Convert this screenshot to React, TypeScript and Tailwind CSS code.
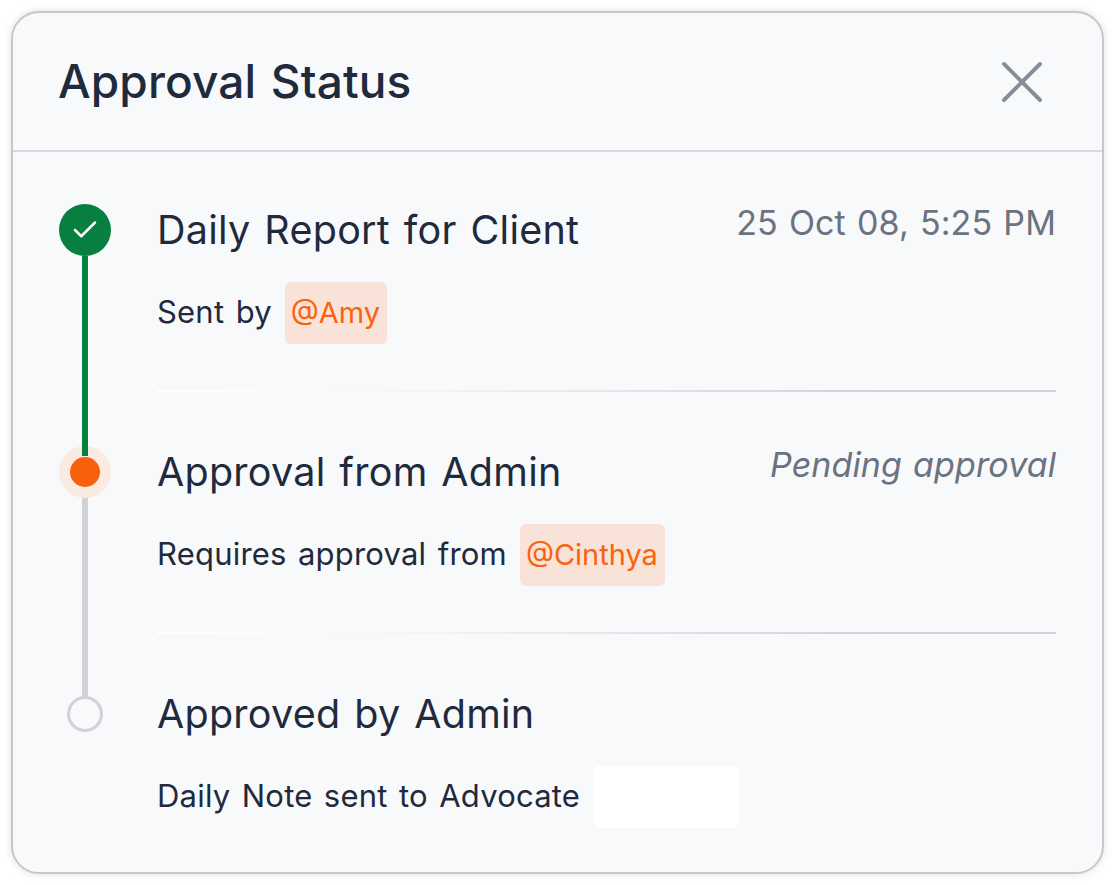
import { Check, X } from 'lucide-react';

type Step = {
  title: string;
  meta?: string;
  metaItalic?: boolean;
  sub: string;
  tag: string;
  state: 'done' | 'active' | 'todo';
};

const STEPS: Step[] = [
  { title: 'Daily Report for Client', meta: '25 Oct 08, 5:25 PM', sub: 'Sent by', tag: '@Amy', state: 'done' },
  { title: 'Approval from Admin', meta: 'Pending approval', metaItalic: true, sub: 'Requires approval from', tag: '@Cinthya', state: 'active' },
  { title: 'Approved by Admin', sub: 'Daily Note sent to Advocate', tag: '', state: 'todo' },
];

function Marker({ state }: { state: Step['state'] }) {
  if (state === 'done') {
    return (
      <div className="relative z-10 flex h-[52px] w-[52px] shrink-0 items-center justify-center rounded-full bg-[#067f40]">
        <Check className="h-[30px] w-[30px] text-white" strokeWidth={2} />
      </div>
    );
  }
  if (state === 'active') {
    return (
      <div className="relative flex h-[52px] w-[52px] shrink-0 items-center justify-center rounded-full bg-[#fbeae2]">
        <div className="relative z-10 h-[30px] w-[30px] rounded-full bg-[#f9600c]" />
      </div>
    );
  }
  return (
    <div className="flex h-[52px] w-[52px] shrink-0 items-center justify-center">
      <div className="relative z-10 h-[36px] w-[36px] rounded-full border-[3px] border-[#d1d2d6] bg-[#f8f9fb]" />
    </div>
  );
}

function Row({ step, last }: { step: Step; last: boolean }) {
  return (
    <div className="flex h-[242px] gap-[46px]">
      <div className="flex w-[52px] flex-col items-center">
        <Marker state={step.state} />
        {step.state === 'done' && <div className="z-[1] -mb-[10px] w-[6px] flex-1 bg-[#067f40]" />}
        {step.state === 'active' && <div className="-mb-[10px] -mt-[10px] w-[6px] flex-1 bg-[#d1d2d6]" />}
      </div>
      <div className="flex-1">
        <div className="flex h-[52px] items-start justify-between">
          <div className="text-[39.5px] leading-[52px] tracking-[0.25px] [word-spacing:2.5px]">{step.title}</div>
          {step.meta && (
            <div className={`text-[34px] leading-[38px] tracking-[0.1px] text-[#6b7280] [word-spacing:1.5px] ${step.metaItalic ? 'italic' : ''}`}>
              {step.meta}
            </div>
          )}
        </div>
        <div className="mt-[26px] flex h-[62px] items-center gap-[13px] text-[31px] tracking-[0.2px] [word-spacing:2.5px]">
          <span className="pb-[2px]">{step.sub}</span>
          {step.tag ? (
            <span className="flex h-[62px] items-center rounded-[6px] bg-[#f9e2d8] pl-[6px] pr-[7px] text-[29px] tracking-normal text-[#f9620e]">{step.tag}</span>
          ) : (
            <span className="h-[62px] w-[146px] rounded-[6px] bg-white" />
          )}
        </div>
        {!last && <div className="mt-[46px] h-[2px] bg-gradient-to-r from-white via-[#f6f7f8] via-25% to-[#d1d2d6] to-80%" />}
      </div>
    </div>
  );
}

export default function App() {
  return (
    <div className="h-[885px] w-[1115px] bg-white p-[11px] font-['Inter',sans-serif] text-[#1f2a3d]">
      <div className="h-[863px] w-[1093px] overflow-hidden rounded-[28px] border-2 border-[#c6c8cc] bg-[#f8f9fb] shadow-[0_0_8px_rgba(0,0,0,0.12)]">
        <header className="flex h-[139px] items-center justify-between border-b-2 border-[#d7d9dd] pl-[45px] pr-[44px]">
          <h1 className="text-[46px] font-medium tracking-[0.15px] [word-spacing:2px]">Approval Status</h1>
          <X className="h-[72px] w-[72px] text-[#878e99]" strokeWidth={1.3} />
        </header>
        <div className="pl-[46px] pr-[46px] pt-[52px]">
          {STEPS.map((step, i) => (
            <Row key={step.title} step={step} last={i === STEPS.length - 1} />
          ))}
        </div>
      </div>
    </div>
  );
}
